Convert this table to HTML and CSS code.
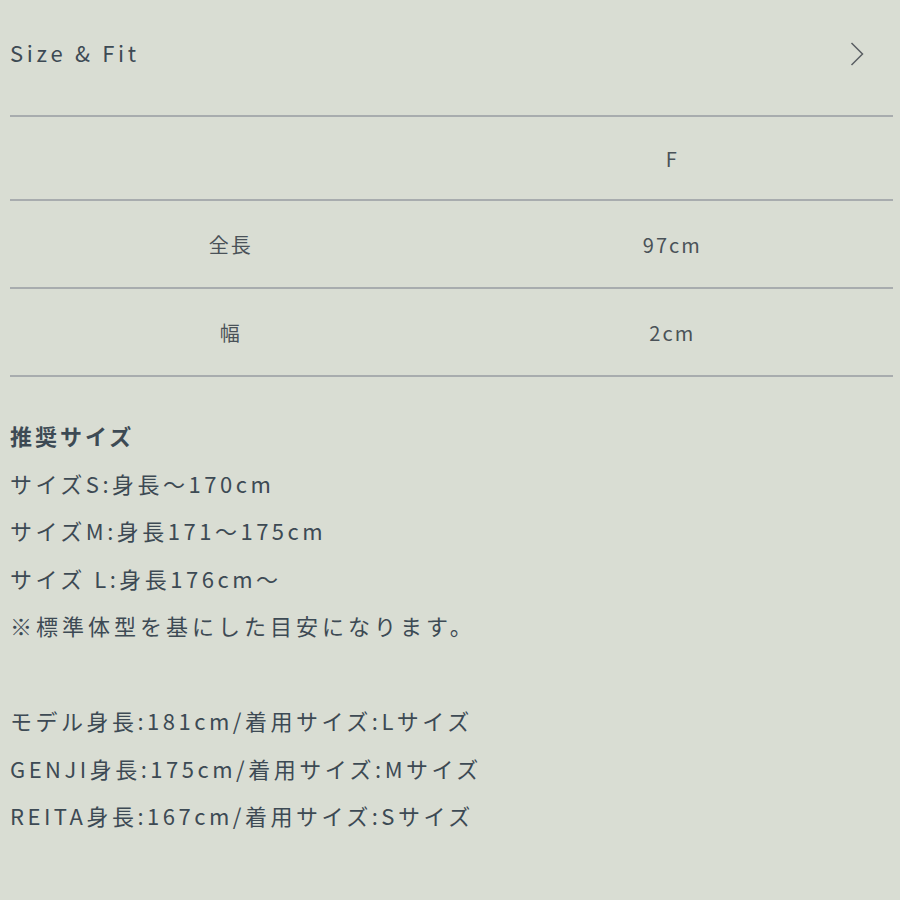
FILE: index.html
```html
<!DOCTYPE html>
<html lang="ja">
<head>
  <meta charset="UTF-8">
  <meta name="viewport" content="width=device-width, initial-scale=1.0">
  <title>Size &amp; Fit</title>
  <link rel="stylesheet" href="styles.css">
</head>
<body>
  <div class="container">
    <div class="header">
      <h2>Size &amp; Fit</h2>
      <svg class="chevron" width="14" height="24" viewBox="0 0 14 24">
        <polyline points="1.5,1 12.5,12 1.5,23" fill="none" stroke="#5a5f63" stroke-width="1.5"/>
      </svg>
    </div>

    <table class="size-table">
      <tr class="head-row">
        <td></td>
        <td>F</td>
      </tr>
      <tr>
        <td>全長</td>
        <td>97cm</td>
      </tr>
      <tr>
        <td>幅</td>
        <td>2cm</td>
      </tr>
    </table>

    <div class="notes">
      <p class="notes-title">推奨サイズ</p>
      <p>サイズS:身長～170cm</p>
      <p>サイズM:身長171～175cm</p>
      <p>サイズ L:身長176cm～</p>
      <p class="warn">※標準体型を基にした目安になります。</p>
      <p class="blank">&nbsp;</p>
      <p>モデル身長:181cm/着用サイズ:Lサイズ</p>
      <p>GENJI身長:175cm/着用サイズ:Mサイズ</p>
      <p>REITA身長:167cm/着用サイズ:Sサイズ</p>
    </div>
  </div>
</body>
</html>
```

FILE: styles.css
```css
body {
  margin: 0;
  background-color: #d9ddd3;
  font-family: "Noto Sans CJK JP", "Noto Sans", sans-serif;
  color: #3d4a54;
}
.container {
  padding: 0 7px 0 10px;
}
.header {
  height: 115px;
  display: flex;
  align-items: center;
  justify-content: space-between;
  padding-right: 29px;
}
.header h2 {
  margin: 0;
  font-size: 22px;
  font-weight: 400;
  letter-spacing: 3.7px;
  padding-bottom: 12px;
}
.chevron {
  display: block;
  margin-bottom: 8px;
}
.size-table {
  width: 100%;
  border-collapse: collapse;
  border-top: 2px solid #a8acae;
  table-layout: fixed;
}
.size-table td {
  width: 50%;
  text-align: center;
  font-size: 20px;
  letter-spacing: 2px;
  color: #4a5258;
  border-bottom: 2px solid #a8acae;
  height: 86px;
  padding: 0;
}
.size-table .head-row td {
  height: 82px;
}
.notes {
  padding-top: 35px;
}
.notes p {
  margin: 0;
  font-size: 22px;
  line-height: 47.5px;
  letter-spacing: 3.5px;
}
.notes .notes-title {
  font-weight: 700;
  letter-spacing: 3px;
}
.notes .warn {
  letter-spacing: 4px;
}
```
